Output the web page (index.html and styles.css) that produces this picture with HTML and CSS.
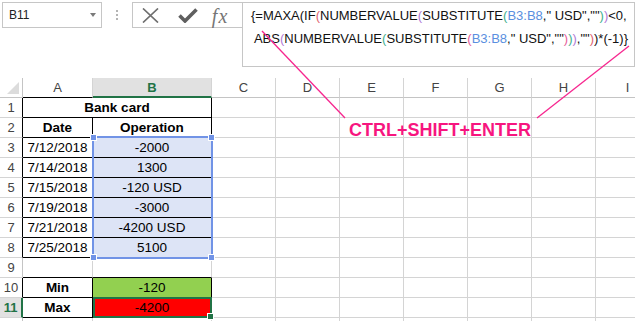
FILE: index.html
```html
<!DOCTYPE html>
<html>
<head>
<meta charset="utf-8">
<link rel="stylesheet" href="styles.css">
</head>
<body>
<div class="app">
  <div class="fbar">
    <div class="namebox"><span>B11</span><span class="caret"></span></div>
    <div class="grip"><i></i><i></i><i></i></div>
    <div class="tools">
      <svg class="ic-x" width="17" height="15" viewBox="0 0 17 15"><path d="M1 0.5L16 14.5M16 0.5L1 14.5" stroke="#6e6e6e" stroke-width="1.7" fill="none"/></svg>
      <svg class="ic-ok" width="20" height="15" viewBox="0 0 20 15"><path d="M1.5 7.5L7 13L18.5 1.5" stroke="#5f5f5f" stroke-width="3.6" fill="none"/></svg>
      <span class="fx">fx</span>
    </div>
    <div class="formula">{=MAXA(IF<span class="p2">(</span>NUMBERVALUE<span class="p3">(</span>SUBSTITUTE<span class="p4">(</span><span class="ref">B3:B8</span>," USD",""<span class="p4">)</span><span class="p3">)</span>&lt;0,
 ABS<span class="p3">(</span>NUMBERVALUE<span class="p4">(</span>SUBSTITUTE<span class="p5">(</span><span class="ref">B3:B8</span>," USD",""<span class="p5">)</span><span class="p4">)</span><span class="p3">)</span>,""<span class="p2">)</span>)*(-1)}</div>
  </div>

  <div class="sheetwrap">
    <div class="cells">
      <div class="corner"></div><div class="ch">A</div><div class="ch sel">B</div><div class="ch">C</div><div class="ch">D</div><div class="ch">E</div><div class="ch">F</div><div class="ch">G</div><div class="ch">H</div><div class="ch">I</div>

      <div class="rh tb">1</div><div class="c t b merged">Bank card</div><div class="c"></div><div class="c"></div><div class="c"></div><div class="c"></div><div class="c"></div><div class="c"></div><div class="c"></div>

      <div class="rh tb">2</div><div class="c t b">Date</div><div class="c t b">Operation</div><div class="c"></div><div class="c"></div><div class="c"></div><div class="c"></div><div class="c"></div><div class="c"></div><div class="c"></div>

      <div class="rh tb">3</div><div class="c t">7/12/2018</div><div class="c t rng">-2000</div><div class="c"></div><div class="c"></div><div class="c"></div><div class="c"></div><div class="c"></div><div class="c"></div><div class="c"></div>

      <div class="rh tb">4</div><div class="c t">7/14/2018</div><div class="c t rng">1300</div><div class="c"></div><div class="c"></div><div class="c"></div><div class="c"></div><div class="c"></div><div class="c"></div><div class="c"></div>

      <div class="rh tb">5</div><div class="c t">7/15/2018</div><div class="c t rng">-120 USD</div><div class="c"></div><div class="c"></div><div class="c"></div><div class="c"></div><div class="c"></div><div class="c"></div><div class="c"></div>

      <div class="rh tb">6</div><div class="c t">7/19/2018</div><div class="c t rng">-3000</div><div class="c"></div><div class="c"></div><div class="c"></div><div class="c"></div><div class="c"></div><div class="c"></div><div class="c"></div>

      <div class="rh tb">7</div><div class="c t">7/21/2018</div><div class="c t rng">-4200 USD</div><div class="c"></div><div class="c"></div><div class="c"></div><div class="c"></div><div class="c"></div><div class="c"></div><div class="c"></div>

      <div class="rh tb">8</div><div class="c t">7/25/2018</div><div class="c t rng">5100</div><div class="c"></div><div class="c"></div><div class="c"></div><div class="c"></div><div class="c"></div><div class="c"></div><div class="c"></div>

      <div class="rh">9</div><div class="c bb"></div><div class="c bb"></div><div class="c"></div><div class="c"></div><div class="c"></div><div class="c"></div><div class="c"></div><div class="c"></div><div class="c"></div>

      <div class="rh tb">10</div><div class="c t b">Min</div><div class="c t green">-120</div><div class="c"></div><div class="c"></div><div class="c"></div><div class="c"></div><div class="c"></div><div class="c"></div><div class="c"></div>

      <div class="rh sel">11</div><div class="c t b">Max</div><div class="c t red">-4200</div><div class="c"></div><div class="c"></div><div class="c"></div><div class="c"></div><div class="c"></div><div class="c"></div><div class="c"></div>

      <div class="rh"></div><div class="c"></div><div class="c"></div><div class="c"></div><div class="c"></div><div class="c"></div><div class="c"></div><div class="c"></div><div class="c"></div><div class="c"></div>
    </div>
    <div class="overlay">
      <div class="range"><i class="h tl"></i><i class="h tr"></i><i class="h bl"></i><i class="h br"></i></div>
      <div class="active"><i class="fill"></i></div>
    </div>
  </div>

  <svg class="lines" width="635" height="321" viewBox="0 0 635 321">
    <path d="M262 31L345 118" stroke="#f7268f" stroke-width="1.3" fill="none"/>
    <path d="M629 46L537 118" stroke="#f7268f" stroke-width="1.3" fill="none"/>
  </svg>
  <div class="callout">CTRL+SHIFT+ENTER</div>
</div>
</body>
</html>
```

FILE: styles.css
```css
* { box-sizing: border-box; margin: 0; padding: 0; }
html, body { width: 635px; height: 321px; overflow: hidden; background: #fff; }
body { font-family: "Liberation Sans", Arial, sans-serif; color: #000; }

.app { position: relative; width: 635px; height: 321px; overflow: hidden; }

/* formula bar */
.fbar { display: flex; align-items: flex-start; height: 78px; padding: 2px 0 0 2px; }
.namebox {
  width: 102px; height: 26px; border: 1px solid #c6c6c6;
  display: flex; align-items: center; justify-content: space-between;
  padding: 0 5px 0 6px; font-size: 12px; color: #222;
}
.caret { width: 0; height: 0; border-left: 3.5px solid transparent; border-right: 3.5px solid transparent; border-top: 4px solid #7a7a7a; }
.grip { width: 30px; height: 26px; display: flex; flex-direction: column; align-items: center; justify-content: center; gap: 2px; }
.grip i { display: block; width: 2px; height: 2px; background: #b4b4b4; }
.tools {
  width: 112px; height: 26px; border: 1px solid #c6c6c6; border-right: 0;
  display: flex; align-items: center; padding-left: 9px;
}
.ic-x { margin-right: 19px; }
.ic-ok { margin-right: 14px; }
.fx { font-family: "Liberation Serif", serif; font-style: italic; font-size: 20px; color: #767676; letter-spacing: 1px; line-height: 20px; margin-top: 2px; }
.formula {
  width: 400px; height: 65px; border: 1px solid #c6c6c6;
  white-space: pre; font-size: 13px; line-height: 23px; padding: 1px 0 0 8px; color: #111;
}
.p2 { color: #e0626f; }
.p3 { color: #b07ad6; }
.p4 { color: #3fb08f; }
.p5 { color: #e6609a; }
.ref { color: #5a8fe0; }

/* sheet */
.sheetwrap { display: grid; }
.cells, .overlay {
  grid-area: 1 / 1;
  display: grid;
  grid-template-columns: 23px 70px 119px repeat(7, 64px);
  grid-auto-rows: 20px;
}
.cells { font-size: 13.5px; line-height: 19px; }
.cells > div {
  border-right: 1px solid #d4d4d4; border-bottom: 1px solid #d4d4d4;
  text-align: center; white-space: nowrap; overflow: hidden;
}
.cells > .corner { border-right: 1px solid #c4c4c4; border-bottom: 1px solid #c4c4c4; display: flex; align-items: flex-end; justify-content: flex-end; padding: 0 3px 3px 0; }
.corner::after { content: ""; width: 0; height: 0; border-left: 12px solid transparent; border-bottom: 12px solid #dcdcdc; }
.cells > .ch { color: #444; border-bottom-color: #c4c4c4; font-size: 13px; }
.cells > .ch:nth-child(2) { border-bottom-color: #000; }
.cells > .ch.sel { background: #e1e1e1; color: #217346; font-weight: bold; border-bottom: 2px solid #217346; }
.cells > .rh { color: #444; border-right-color: #c4c4c4; font-size: 13px; }
.cells > .rh.tb { border-right-color: #000; }
.cells > .rh.sel { background: #e1e1e1; color: #217346; font-weight: bold; border-right: 2px solid #217346; }
.cells > .t { border-right-color: #000; border-bottom-color: #000; }
.cells > .bb { border-bottom-color: #000; }
.b { font-weight: bold; }
.merged { grid-column: span 2; }
.rng { background: #dde4f6; }
.green { background: #92d050; }
.red { background: #ff0000; }

.overlay { pointer-events: none; }
.range {
  grid-row: 4 / 10; grid-column: 3 / 4;
  margin: -2px -1px -1px -1px;
  border: 2px solid #7193e6; position: relative;
}
.h { position: absolute; width: 7px; height: 7px; background: #7193e6; border: 1px solid #fff; }
.tl { left: -4px; top: -4px; }
.tr { right: -4px; top: -4px; }
.bl { left: -4px; bottom: -4px; }
.br { right: -4px; bottom: -4px; }
.active {
  grid-row: 12 / 13; grid-column: 3 / 4;
  margin: -1px 0 0 0;
  border: 2px solid #217346; position: relative;
}
.fill { position: absolute; right: -4px; bottom: -4px; width: 7px; height: 7px; background: #217346; border: 1px solid #fff; }

/* annotation */
.lines { position: absolute; left: 0; top: 0; pointer-events: none; }
.callout {
  position: absolute; left: 349px; top: 120px;
  font-family: "Liberation Sans", Arial, sans-serif; font-weight: bold;
  font-size: 18px; line-height: 20px; color: #f7157f;
}
```
